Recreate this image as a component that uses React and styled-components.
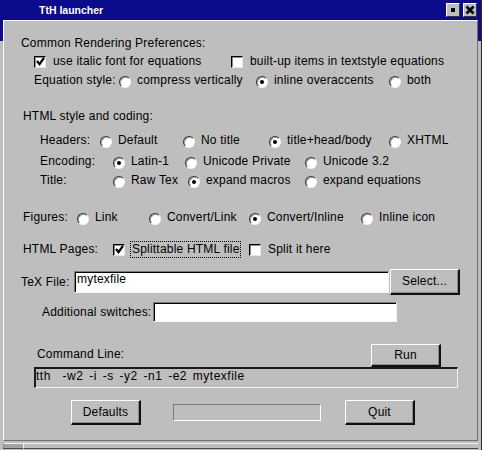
import React from 'react';
import styled, { createGlobalStyle } from 'styled-components';

const Global = createGlobalStyle`
  html, body { margin: 0; padding: 0; background: #bebebe; }
  body { font-family: "Liberation Sans", Arial, sans-serif; font-size: 12px; color: #000; letter-spacing: 0.2px; }
  * { box-sizing: border-box; }
`;

const BLUE = '#0b0b8c';
const GREY = '#bebebe';

const Window = styled.div`
  width: 482px;
  height: 450px;
  display: flex;
  flex-direction: column;
  overflow: hidden;
  background: linear-gradient(to bottom, ${BLUE} 0, ${BLUE} 41px, ${GREY} 41px);
  border-right: 1px solid #2a2a2a;
`;

const TitleBar = styled.div`
  height: 20px;
  flex: none;
  display: flex;
  align-items: center;
  padding: 0 4px 0 39px;
  background-color: ${BLUE};
  background-image: radial-gradient(#2424a0 0.6px, transparent 0.7px);
  background-size: 2px 2px;
`;

const Title = styled.span`
  color: #fff;
  font-weight: bold;
  font-size: 10.5px;
  line-height: 20px;
  letter-spacing: 0;
`;

const TitleButtons = styled.div`
  margin-left: auto;
  display: flex;
  gap: 3px;
`;

const TitleButton = styled.span`
  width: 14px;
  height: 14px;
  display: flex;
  align-items: center;
  justify-content: center;
  background: ${GREY};
  border: 1px solid;
  border-color: #fff #333 #333 #fff;
`;

const Square = styled.span`
  width: 4px;
  height: 4px;
  background: #000;
`;

const Frame = styled.div`
  flex: 1;
  display: flex;
  flex-direction: column;
  padding: 0 3px 0 3px;
`;

const Panel = styled.div`
  flex: 1;
  display: flex;
  flex-direction: column;
  background: ${GREY};
  border: 1px solid;
  border-color: #fff #6e6e6e #6e6e6e #fff;
`;

const BottomStrip = styled.div`
  height: 9px;
  flex: none;
  display: flex;
  padding: 2px 0 1px 0;
`;

const Grip = styled.div`
  flex: ${p => (p.$wide ? 1 : 'none')};
  width: ${p => (p.$wide ? 'auto' : '20px')};
  background: ${p => (p.$wide ? GREY : '#a4a4a4')};
  border-top: 1px solid #f4f4f4;
  border-left: 1px solid ${p => (p.$wide ? '#f4f4f4' : '#8a8a8a')};
  border-bottom: 1px solid #4a4a4a;
`;

const Row = styled.div`
  display: flex;
  align-items: center;
  flex: none;
  height: ${p => p.$h || 15}px;
  margin-top: ${p => p.$mt || 0}px;
  padding-left: ${p => p.$pl || 0}px;
  padding-right: ${p => p.$pr || 0}px;
  line-height: 15px;
  white-space: nowrap;
  justify-content: ${p => (p.$spread ? 'space-between' : 'flex-start')};
`;

const Label = styled.span`
  flex: none;
  width: ${p => (p.$w ? `${p.$w}px` : 'auto')};
  align-self: ${p => (p.$top ? 'flex-start' : 'auto')};
  margin-top: ${p => p.$top || 0}px;
`;

const Option = styled.span`
  flex: none;
  display: flex;
  align-items: center;
  width: ${p => (p.$w ? `${p.$w}px` : 'auto')};
  margin-left: ${p => p.$ml || 0}px;
`;

const RadioDot = styled.span`
  flex: none;
  width: 12px;
  height: 12px;
  margin-right: 6px;
  align-self: flex-start;
  margin-top: 2.5px;
  border-radius: 50%;
  border: 1.5px solid;
  border-color: #333 #f6f6f6 #f6f6f6 #333;
  background: #fff;
  box-shadow: inset 1px 1px 0 #a8a8a8;
  display: flex;
  align-items: center;
  justify-content: center;
  &::after {
    content: '';
    width: 4px;
    height: 4px;
    border-radius: 50%;
    background: ${p => (p.$on ? '#000' : 'transparent')};
  }
`;

const CheckBox = styled.span`
  flex: none;
  width: 12px;
  height: 12px;
  margin-right: ${p => p.$mr ?? 7}px;
  background: #fff;
  border: 1px solid;
  border-color: #000 #e6e6e6 #e6e6e6 #000;
  box-shadow: inset 1px 1px 0 #8a8a8a;
  display: flex;
  align-items: center;
  justify-content: center;
`;

const Focus = styled.span`
  flex: none;
  width: ${p => p.$w}px;
  height: 17px;
  border: 1px dotted #000;
  padding-left: 1px;
  line-height: 15px;
  margin-right: ${p => p.$mr || 0}px;
  overflow: hidden;
`;

const Entry = styled.div`
  flex: none;
  width: ${p => p.$w}px;
  height: ${p => p.$h}px;
  margin-left: ${p => p.$ml || 0}px;
  background: #fff;
  border: 1px solid;
  border-color: #7a7a7a #f6f6f6 #f6f6f6 #7a7a7a;
  box-shadow: inset 1px 1px 0 #000;
  padding: 0 2px;
  line-height: 15px;
`;

const CommandEntry = styled.div`
  flex: none;
  width: 424px;
  height: 21px;
  background: ${GREY};
  border: solid;
  border-width: 2px 1px 1px 2px;
  border-color: #1a1a1a #f2f2f2 #f2f2f2 #1a1a1a;
  line-height: 14px;
  white-space: pre;
  letter-spacing: 0.5px;
  word-spacing: 2px;
`;

const Button = styled.button`
  flex: none;
  width: ${p => p.$w || 70}px;
  height: ${p => p.$h}px;
  margin-left: ${p => p.$ml || 0}px;
  padding: 0;
  font: inherit;
  letter-spacing: inherit;
  line-height: 15px;
  color: #000;
  background: ${GREY};
  border: solid;
  border-width: 1px 2px 2px 1px;
  border-color: #fff #111 #111 #fff;
  box-shadow: inset -1px -1px 0 #8c8c8c;
`;

const Progress = styled.div`
  flex: none;
  width: 148px;
  height: 17px;
  margin-left: ${p => p.$ml}px;
  background: ${GREY};
  border: 1px solid;
  border-color: #7a7a7a #fff #fff #7a7a7a;
`;

const Tick = () => (
  <svg width="9" height="9" viewBox="0 0 9 9">
    <path d="M1 4 L3.5 7.2 L8 0.8" fill="none" stroke="#000" strokeWidth="2.2" />
  </svg>
);

const Cross = () => (
  <svg width="10" height="10" viewBox="0 0 10 10">
    <path d="M1.5 1.5 L8.5 8.5 M8.5 1.5 L1.5 8.5" stroke="#000" strokeWidth="2.6" />
  </svg>
);

const Radio = ({ on, w, children }) => (
  <Option $w={w}>
    <RadioDot $on={on} />
    <span>{children}</span>
  </Option>
);

export default function App() {
  return (
    <>
      <Global />
      <Window>
        <TitleBar>
          <Title>TtH launcher</Title>
          <TitleButtons>
            <TitleButton><Square /></TitleButton>
            <TitleButton><Cross /></TitleButton>
          </TitleButtons>
        </TitleBar>
        <Frame>
          <Panel>
            <Row $mt={15} $pl={17}>Common Rendering Preferences:</Row>
            <Row $mt={3} $pl={30}>
              <Option $w={197}>
                <CheckBox><Tick /></CheckBox>
                <span>use italic font for equations</span>
              </Option>
              <Option>
                <CheckBox />
                <span>built-up items in textstyle equations</span>
              </Option>
            </Row>
            <Row $mt={4} $pl={30}>
              <Label $w={85}>Equation style:</Label>
              <Radio w={137}>compress vertically</Radio>
              <Radio w={133} on>inline overaccents</Radio>
              <Radio>both</Radio>
            </Row>

            <Row $mt={21} $pl={19}>HTML style and coding:</Row>
            <Row $mt={9} $pl={36}>
              <Label $w={60}>Headers:</Label>
              <Radio w={83}>Default</Radio>
              <Radio w={86}>No title</Radio>
              <Radio w={120} on>title+head/body</Radio>
              <Radio>XHTML</Radio>
            </Row>
            <Row $mt={6} $pl={36}>
              <Label $w={73}>Encoding:</Label>
              <Radio w={72} on>Latin-1</Radio>
              <Radio w={120}>Unicode Private</Radio>
              <Radio>Unicode 3.2</Radio>
            </Row>
            <Row $mt={4} $pl={36}>
              <Label $w={73}>Title:</Label>
              <Radio w={75}>Raw Tex</Radio>
              <Radio w={117} on>expand macros</Radio>
              <Radio>expand equations</Radio>
            </Row>

            <Row $mt={22} $pl={19}>
              <Label $w={54}>Figures:</Label>
              <Radio w={72}>Link</Radio>
              <Radio w={100}>Convert/Link</Radio>
              <Radio w={112} on>Convert/Inline</Radio>
              <Radio>Inline icon</Radio>
            </Row>

            <Row $mt={16} $pl={19} $h={17}>
              <Label $w={90}>HTML Pages:</Label>
              <CheckBox $mr={5}><Tick /></CheckBox>
              <Focus $w={111} $mr={8}>Splittable HTML file</Focus>
              <CheckBox />
              <span>Split it here</span>
            </Row>

            <Row $mt={11} $pl={17} $h={26}>
              <Label $w={53}>TeX File:</Label>
              <Entry $w={315} $h={22}>mytexfile</Entry>
              <Button $h={26} $ml={1}>Select...</Button>
            </Row>

            <Row $mt={7} $pl={38} $h={20}>
              <Label $w={111}>Additional switches:</Label>
              <Entry $w={244} $h={20} />
            </Row>

            <Row $mt={22} $pl={33} $pr={36} $h={23} $spread>
              <Label $top={3}>Command Line:</Label>
              <Button $h={23}>Run</Button>
            </Row>
            <Row $pl={30} $h={21}>
              <CommandEntry>tth  -w2 -i -s -y2 -n1 -e2 mytexfile</CommandEntry>
            </Row>

            <Row $mt={12} $pl={67} $h={25}>
              <Button $h={25}>Defaults</Button>
              <Progress $ml={32} />
              <Button $h={25} $ml={24}>Quit</Button>
            </Row>
          </Panel>
          <BottomStrip>
            <Grip />
            <Grip $wide />
          </BottomStrip>
        </Frame>
      </Window>
    </>
  );
}
